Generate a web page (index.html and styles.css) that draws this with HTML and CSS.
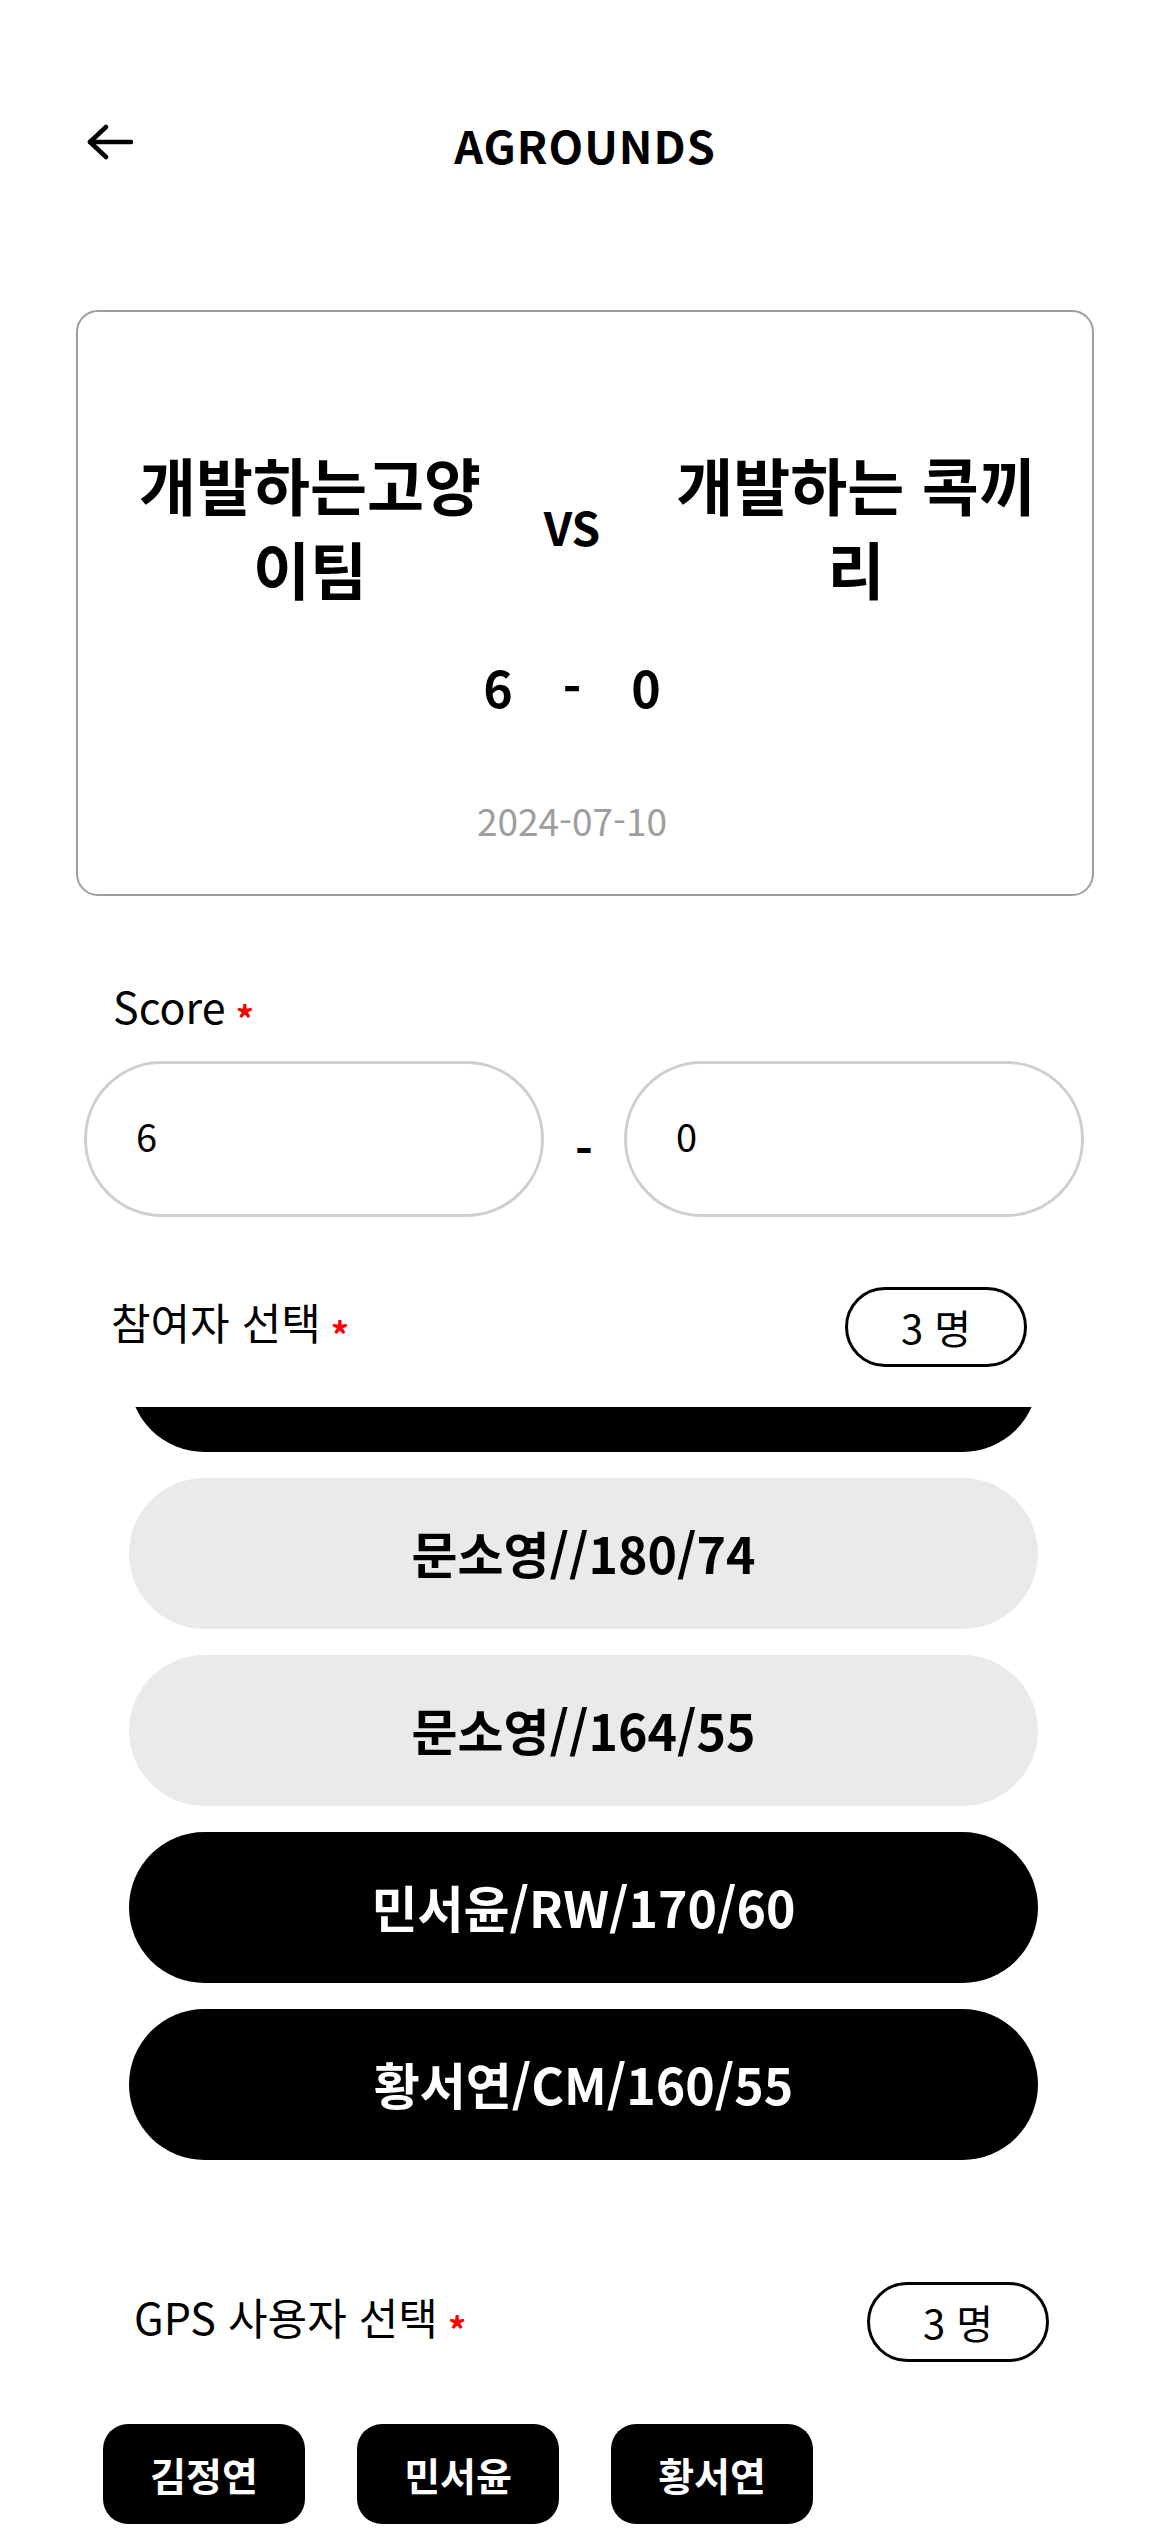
FILE: index.html
```html
<!DOCTYPE html>
<html lang="ko">
<head>
<meta charset="utf-8">
<title>AGROUNDS</title>
<link rel="stylesheet" href="styles.css">
</head>
<body>
<header class="header">
  <div class="back">
    <svg width="46" height="36" viewBox="0 0 46 36" fill="none" stroke="#000" stroke-width="4.5" stroke-linecap="round" stroke-linejoin="round">
      <path d="M3 18H44"/>
      <path d="M19 3L3 18L19 33"/>
    </svg>
  </div>
  <h1 class="title">AGROUNDS</h1>
  <div></div>
</header>

<section class="match-card">
  <div class="teams">
    <div class="team">개발하는고양이팀</div>
    <div class="vs">VS</div>
    <div class="team">개발하는 콕끼리</div>
  </div>
  <div class="result">
    <span>6</span><span>-</span><span>0</span>
  </div>
  <div class="date">2024-07-10</div>
</section>

<section class="score-section">
  <div class="label">Score<span class="req">*</span></div>
  <div class="score-inputs">
    <div class="pill-input">6</div>
    <div class="dash">-</div>
    <div class="pill-input">0</div>
  </div>
</section>

<section class="row-head participants-head">
  <div class="label">참여자 선택<span class="req">*</span></div>
  <div class="count">3 명</div>
</section>

<section class="player-list">
  <div class="player-scroll">
    <div class="player selected">김정연/ST/165/52</div>
    <div class="player">문소영//180/74</div>
    <div class="player">문소영//164/55</div>
    <div class="player selected">민서윤/RW/170/60</div>
    <div class="player selected">황서연/CM/160/55</div>
  </div>
</section>

<section class="row-head gps-head">
  <div class="label">GPS 사용자 선택<span class="req">*</span></div>
  <div class="count">3 명</div>
</section>

<section class="chips">
  <div class="chip">김정연</div>
  <div class="chip">민서윤</div>
  <div class="chip">황서연</div>
</section>
</body>
</html>
```

FILE: styles.css
```css
html, body {
  margin: 0;
  padding: 0;
  background: #fff;
}
body {
  font-family: "Noto Sans CJK KR", "Noto Sans", sans-serif;
  color: #000;
  width: 1170px;
  height: 2532px;
  overflow: hidden;
}

.header {
  display: grid;
  grid-template-columns: 1fr auto 1fr;
  align-items: center;
  height: 88px;
  padding-top: 100px;
}
.back {
  padding-left: 87px;
  display: flex;
  align-items: center;
  height: 36px;
  margin-top: -4px;
}
.back svg { display: block; }
.title {
  margin: 0;
  font-size: 45px;
  font-weight: 700;
  letter-spacing: 1px;
  line-height: 1;
}

.match-card {
  margin: 122px 76px 0;
  height: 586px;
  box-sizing: border-box;
  border: 2px solid #9e9e9e;
  border-radius: 22px;
  padding-top: 130px;
}
.teams {
  display: grid;
  grid-template-columns: 370px 1fr 370px;
  align-items: center;
  margin: 0 51px 0 47px;
}
.team {
  font-size: 62px;
  font-weight: 700;
  line-height: 84px;
  text-align: center;
  word-break: break-all;
}
.vs {
  font-size: 46px;
  font-weight: 700;
  text-align: center;
  padding-right: 22px;
  line-height: 1;
}
.result {
  display: flex;
  justify-content: center;
  margin-top: 46px;
  padding-right: 26px;
  font-size: 50px;
  font-weight: 700;
  line-height: 60px;
}
.result span {
  width: 74px;
  text-align: center;
}
.date {
  margin-top: 82px;
  padding-right: 26px;
  text-align: center;
  font-size: 37px;
  line-height: 44px;
  color: #9e9e9e;
}

.label {
  font-size: 43px;
  line-height: 58px;
  font-weight: 400;
}
.req {
  color: #ff0000;
  font-size: 36px;
  font-weight: 700;
  margin-left: 10px;
  vertical-align: -9px;
}

.score-section {
  margin-top: 80px;
}
.score-section .label {
  padding-left: 113px;
}
.score-inputs {
  display: grid;
  grid-template-columns: 1fr 80px 1fr;
  margin: 15px 86px 0 84px;
}
.pill-input {
  height: 156px;
  box-sizing: border-box;
  border: 3px solid #cfcfcf;
  border-radius: 78px;
  display: flex;
  align-items: center;
  padding-left: 49px;
  padding-bottom: 8px;
  font-size: 38px;
}
.dash {
  display: flex;
  align-items: center;
  justify-content: center;
  font-size: 48px;
  font-weight: 700;
  padding-top: 18px;
}

.row-head {
  display: flex;
  justify-content: space-between;
  align-items: center;
}
.count {
  height: 80px;
  box-sizing: border-box;
  border: 3px solid #000;
  border-radius: 40px;
  width: 182px;
  display: flex;
  align-items: center;
  justify-content: center;
  font-size: 40px;
}
.participants-head {
  margin-top: 70px;
  padding: 0 143px 0 111px;
}

.player-list {
  margin-top: 40px;
  overflow: hidden;
  padding: 0 132px 0 129px;
}
.player-scroll {
  display: flex;
  flex-direction: column;
  gap: 26px;
  margin-top: -106px;
}
.player {
  height: 151px;
  border-radius: 76px;
  background: #e9eaec;
  display: flex;
  align-items: center;
  justify-content: center;
  font-size: 50px;
  font-weight: 700;
  padding-bottom: 4px;
  box-sizing: border-box;
}
.player.selected {
  background: #000;
  color: #fff;
}

.gps-head {
  margin-top: 122px;
  padding: 0 121px 0 134px;
}

.chips {
  display: flex;
  gap: 52px;
  margin-top: 62px;
  padding-left: 103px;
}
.chip {
  width: 202px;
  height: 100px;
  border-radius: 25px;
  background: #000;
  color: #fff;
  display: flex;
  align-items: center;
  justify-content: center;
  font-size: 39px;
  font-weight: 700;
}
```
